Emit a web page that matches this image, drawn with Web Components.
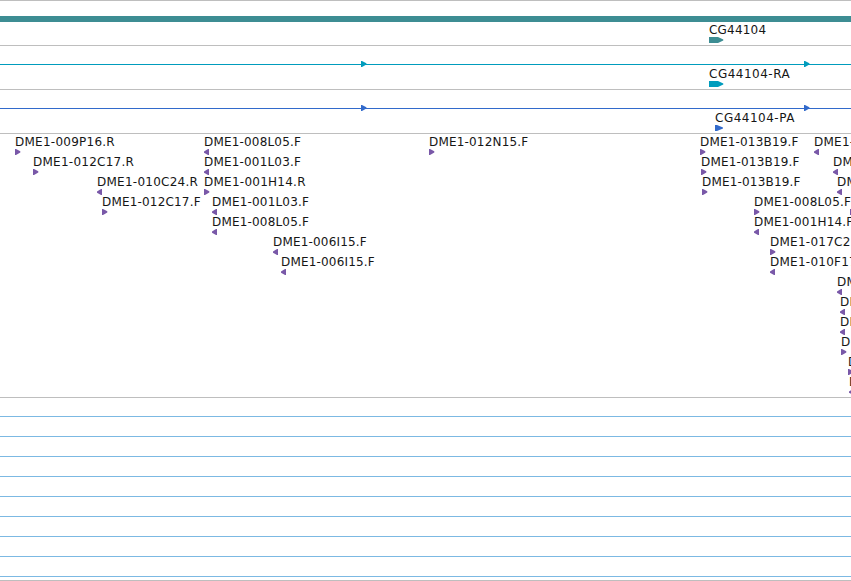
<!DOCTYPE html>
<html lang="en">
<head>
<meta charset="utf-8">
<title>Genome browser</title>
<style>
  html, body { margin: 0; height: 581px; background: #fff; overflow: hidden; }
  body { font: 12px "DejaVu Sans", sans-serif; color: #161616; }
</style>
</head>
<body>
<genome-view></genome-view>

<script>
// One feature: label on top and a small glyph below it.
class GenomeFeature extends HTMLElement {
  constructor() {
    super();
    this.attachShadow({ mode: 'open' });
  }

  connectedCallback() {
    const shapes = {
      right: [6, 'M0 0H1L5.3 2.3V3.5L1 6H0Z'],
      left: [6, 'M5 0V6H4L0 3.7V2.5L4 0Z'],
      gene: [15, 'M0 0H9L14.3 2.6V3.4L9 6H0Z'],
      exon: [9, 'M0 0H2L8 2.6V3.4L2 6H0Z']
    };
    const [width, d] = shapes[this.getAttribute('shape')];
    this.shadowRoot.innerHTML = `
      <style>
        :host {
          display: block; grid-area: 1 / 1; height: 20px;
          margin-left: var(--start); white-space: nowrap;
          letter-spacing: var(--spacing, 0.25px);
        }
        .label { height: 15px; line-height: 17px; }
        svg { display: block; fill: var(--color); }
      </style>
      <div class="label"><slot></slot></div>
      <svg width="${width}" height="6"><path d="${d}"/></svg>
    `;
    this.style.setProperty('--start', this.getAttribute('start') + 'px');
    // names ending in F are set a little tighter
    if (this.textContent.endsWith('.F')) this.style.setProperty('--spacing', '0.18px');
  }
}
customElements.define('genome-feature', GenomeFeature);

// Horizontal line of a gene, transcript or protein, with its direction marks.
class SpanLine extends HTMLElement {
  constructor() {
    super();
    this.attachShadow({ mode: 'open' });
  }

  connectedCallback() {
    const marks = (this.getAttribute('marks') || '').split(' ').filter(Boolean);
    this.shadowRoot.innerHTML = `
      <style>
        :host { display: block; height: 7px; }
        svg { display: block; fill: var(--color); }
      </style>
      <svg width="851" height="7">
        ${marks.length
          ? '<rect y="4" width="851" height="1"/>'
          : '<rect width="851" height="6"/>'}
        ${marks.map(x => `<path d="M${x} 1H${+x + 1}L${+x + 5.4} 3.3V4.4L${+x + 1} 7H${x}Z"/>`).join('')}
      </svg>
    `;
  }
}
customElements.define('span-line', SpanLine);

// A row of features, each placed from its start position.
class FeatureRow extends HTMLElement {
  constructor() {
    super();
    this.attachShadow({ mode: 'open' });
    this.shadowRoot.innerHTML = `
      <style>
        :host { display: grid; grid-template-columns: 851px; height: 20px; }
      </style>
      <slot></slot>
    `;
  }
}
customElements.define('feature-row', FeatureRow);

// A track closed at the bottom by a grey rule.
class GenomeTrack extends HTMLElement {
  constructor() {
    super();
    this.attachShadow({ mode: 'open' });
    this.shadowRoot.innerHTML = `
      <style>
        :host {
          display: block; box-sizing: border-box; overflow: hidden;
          border-bottom: 1px solid #bebebe;
          height: var(--height); padding-top: var(--top, 0);
        }
      </style>
      <slot></slot>
    `;
  }
}
customElements.define('genome-track', GenomeTrack);

// Empty track with evenly spaced blue lines.
class LineGrid extends HTMLElement {
  constructor() {
    super();
    this.attachShadow({ mode: 'open' });
    this.shadowRoot.innerHTML = `
      <style>
        :host { display: block; }
        div { box-sizing: border-box; height: 20px; border-bottom: 1px solid #7cb9e3; }
        div:first-of-type { height: 19px; }
      </style>
      ${'<div></div>'.repeat(9)}
    `;
  }
}
customElements.define('line-grid', LineGrid);

const CLONES = [
  [[15, 'right', 'DME1-009P16.R'], [204, 'left', 'DME1-008L05.F'], [429, 'right', 'DME1-012N15.F'], [700, 'right', 'DME1-013B19.F'], [814, 'left', 'DME1-']],
  [[33, 'right', 'DME1-012C17.R'], [204, 'left', 'DME1-001L03.F'], [701, 'right', 'DME1-013B19.F'], [833, 'left', 'DM']],
  [[97, 'left', 'DME1-010C24.R'], [204, 'right', 'DME1-001H14.R'], [702, 'right', 'DME1-013B19.F'], [837, 'left', 'DM']],
  [[102, 'right', 'DME1-012C17.F'], [212, 'left', 'DME1-001L03.F'], [754, 'right', 'DME1-008L05.F'], [850, 'right', '']],
  [[212, 'left', 'DME1-008L05.F'], [754, 'left', 'DME1-001H14.F']],
  [[273, 'left', 'DME1-006I15.F'], [770, 'right', 'DME1-017C2']],
  [[281, 'left', 'DME1-006I15.F'], [770, 'left', 'DME1-010F17']],
  [[837, 'left', 'DM']],
  [[840, 'left', 'DM']],
  [[840, 'left', 'DM']],
  [[841, 'right', 'D']],
  [[848, 'right', 'D']],
  [[849, 'left', 'D']]
];

class GenomeView extends HTMLElement {
  constructor() {
    super();
    this.attachShadow({ mode: 'open' });
  }

  connectedCallback() {
    const rows = CLONES.map(row => `
      <feature-row>${row.map(([start, shape, name]) =>
        `<genome-feature start="${start}" shape="${shape}">${name}</genome-feature>`
      ).join('')}</feature-row>`).join('');

    this.shadowRoot.innerHTML = `
      <style>
        :host {
          display: block; box-sizing: border-box;
          width: 851px; height: 581px; overflow: hidden;
          border-top: 1px solid #bebebe;
        }
        .gene { --height: 45px; --top: 15px; --color: #3d8d93; --spacing: 0.2px; }
        .transcript { --height: 44px; --top: 14px; --color: #009cbd; --spacing: 0.5px; }
        .protein { --height: 44px; --top: 14px; --color: #326acb; --spacing: 0.5px; }
        .clones { --height: 264px; --color: #7958a8; }
        .grid { --height: 183px; }
        span-line + feature-row { margin-top: -1px; }
      </style>
      <genome-track class="gene">
        <span-line></span-line>
        <feature-row><genome-feature start="709" shape="gene">CG44104</genome-feature></feature-row>
      </genome-track>
      <genome-track class="transcript">
        <span-line marks="361 804"></span-line>
        <feature-row><genome-feature start="709" shape="gene">CG44104-RA</genome-feature></feature-row>
      </genome-track>
      <genome-track class="protein">
        <span-line marks="361 804"></span-line>
        <feature-row><genome-feature start="715" shape="exon">CG44104-PA</genome-feature></feature-row>
      </genome-track>
      <genome-track class="clones">${rows}</genome-track>
      <genome-track class="grid"><line-grid></line-grid></genome-track>
    `;
  }
}
customElements.define('genome-view', GenomeView);
</script>
</body>
</html>
